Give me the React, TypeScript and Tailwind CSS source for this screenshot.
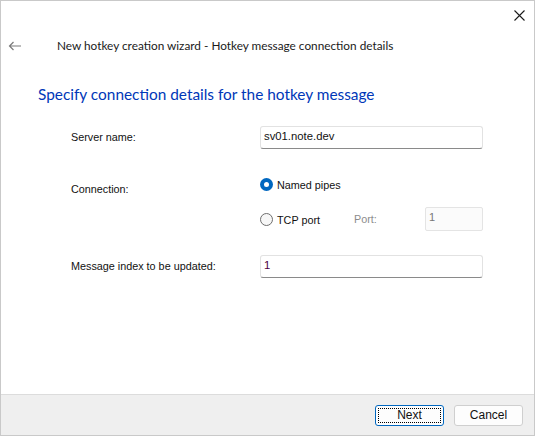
import { useState } from 'react';

function Radio({ checked, label, onClick }: { checked: boolean; label: string; onClick: () => void }) {
  return (
    <button type="button" onClick={onClick} className="flex items-center gap-[4px] text-[10.8px] text-[#111]">
      {checked ? (
        <span className="flex h-[13px] w-[13px] items-center justify-center rounded-full bg-[#0067c0]">
          <span className="h-[5px] w-[5px] rounded-full bg-white" />
        </span>
      ) : (
        <span className="h-[13px] w-[13px] rounded-full border border-[#6e6e6e] bg-[#f7f7f7]" />
      )}
      <span>{label}</span>
    </button>
  );
}

export default function App() {
  const [server, setServer] = useState('sv01.note.dev');
  const [conn, setConn] = useState<'pipes' | 'tcp'>('pipes');
  const [index, setIndex] = useState('1');

  return (
    <div
      className="flex h-[436px] w-[535px] flex-col border border-[#c9c9c9] bg-white"
      style={{ fontFamily: '"Liberation Sans", Arial, sans-serif' }}
    >
      <div className="flex justify-end pr-[9px] pt-[9px]">
        <svg width="11" height="11" viewBox="0 0 11 11" className="text-[#1a1a1a]">
          <path d="M0.5 0.5 L10.5 10.5 M10.5 0.5 L0.5 10.5" stroke="currentColor" strokeWidth="1.1" />
        </svg>
      </div>

      <div className="mt-[16px] flex items-center">
        <svg width="14" height="10" viewBox="0 0 14 10" className="ml-[7px] text-[#7a7a7a]">
          <path d="M13 5 H1.5 M5.5 1 L1.5 5 L5.5 9" stroke="currentColor" strokeWidth="1.2" fill="none" />
        </svg>
        <span
          className="ml-[35px] text-[11.8px] text-[#1a1a1a]"
          style={{ fontFamily: 'Lato, "Open Sans", sans-serif' }}
        >
          New hotkey creation wizard - Hotkey message connection details
        </span>
      </div>

      <h1
        className="ml-[37px] mt-[29px] text-[15.4px] leading-[20px] text-[#0037b8]"
        style={{ fontFamily: 'Lato, "Open Sans", sans-serif' }}
      >
        Specify connection details for the hotkey message
      </h1>

      <div className="ml-[70px] mt-[22px] grid grid-cols-[189px_223px] text-[10.8px] text-[#111]">
        <div className="flex items-center">Server name:</div>
        <input
          value={server}
          onChange={(e) => setServer(e.target.value)}
          className="h-[23px] rounded-[3px] border border-[#e2e2e2] border-b-[#8a8a8a] px-[3px] pb-[3px] text-[11.3px] outline-none"
        />

        <div className="mt-[33px] self-start leading-[14px]">Connection:</div>
        <div className="mt-[28px] flex flex-col">
          <Radio checked={conn === 'pipes'} label="Named pipes" onClick={() => setConn('pipes')} />
          <div className="mt-[14px] flex items-center">
            <div className="w-[94px]">
              <div className="mt-[2px]">
                <Radio checked={conn === 'tcp'} label="TCP port" onClick={() => setConn('tcp')} />
              </div>
            </div>
            <span className="w-[71px] text-[#8c8c8c]">Port:</span>
            <input
              value="1"
              disabled
              readOnly
              className="h-[24px] w-[58px] rounded-[2px] border border-[#e4e4e4] bg-[#fbfbfb] px-[3px] pb-[4px] text-[11px] text-[#777]"
            />
          </div>
        </div>

        <div className="mt-[24px] flex items-center">Message index to be updated:</div>
        <input
          value={index}
          onChange={(e) => setIndex(e.target.value)}
          className="mt-[24px] h-[23px] rounded-[3px] border border-[#e2e2e2] border-b-[#8a8a8a] px-[3px] pb-[3px] text-[11.3px] text-[#4b0040] outline-none"
        />
      </div>

      <div className="flex-1" />

      <div className="flex h-[41px] items-center justify-end gap-[10px] border-t border-[#dcdcdc] bg-[#efefef] pr-[11px]">
        <button
          type="button"
          className="flex h-[21px] w-[69px] items-center justify-center rounded-[3px] border border-[#0067c0] bg-[#fdfdfd] p-[2px] text-[12px] text-[#111]"
        >
          <span className="flex h-full w-full items-center justify-center border border-dotted border-black">Next</span>
        </button>
        <button
          type="button"
          className="h-[21px] w-[69px] rounded-[3px] border border-[#cfcfcf] bg-[#fdfdfd] text-[12px] text-[#111]"
        >
          Cancel
        </button>
      </div>
    </div>
  );
}
